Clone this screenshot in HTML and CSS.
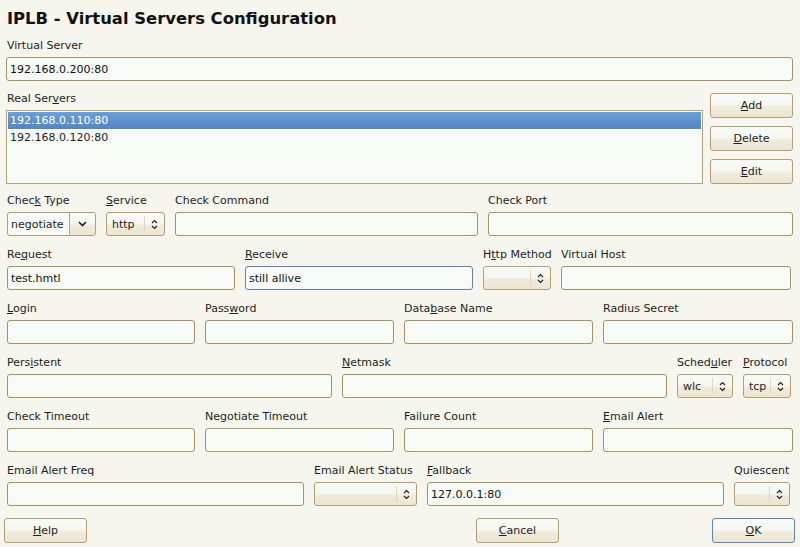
FILE: index.html
```html
<!DOCTYPE html>
<html>
<head>
<meta charset="utf-8">
<link rel="stylesheet" href="styles.css">
</head>
<body>
<div class="dialog">
  <h1 class="title">IPLB - Virtual Servers Configuration</h1>

  <div class="field vs">
    <label class="lbl">Virtual Server</label>
    <input class="inp" type="text" value="192.168.0.200:80">
  </div>

  <div class="real">
    <div class="real-left">
      <label class="lbl">Real Ser<u>v</u>ers</label>
      <div class="list">
        <div class="item sel">192.168.0.110:80</div>
        <div class="item">192.168.0.120:80</div>
      </div>
    </div>
    <div class="real-btns">
      <button class="btn"><u>A</u>dd</button>
      <button class="btn"><u>D</u>elete</button>
      <button class="btn"><u>E</u>dit</button>
    </div>
  </div>

  <div class="row r3">
    <div class="field"><label class="lbl">Chec<u>k</u> Type</label>
      <div class="combo drop"><span class="ctext">negotiate</span><span class="sep"></span>
        <span class="arr"><svg width="9" height="6" viewBox="0 0 9 6"><path d="M1 1 L4.5 4.5 L8 1" fill="none" stroke="#222" stroke-width="1.6"/></svg></span></div>
    </div>
    <div class="field"><label class="lbl"><u>S</u>ervice</label>
      <div class="combo"><span class="ctext">http</span><span class="sep"></span>
        <span class="arr"><svg width="7" height="11" viewBox="0 0 7 11"><path d="M1 4 L3.5 1.5 L6 4 M1 7 L3.5 9.5 L6 7" fill="none" stroke="#222" stroke-width="1.2"/></svg></span></div>
    </div>
    <div class="field"><label class="lbl">Check Command</label><input class="inp" type="text"></div>
    <div class="field"><label class="lbl">Check Port</label><input class="inp" type="text"></div>
  </div>

  <div class="row r4">
    <div class="field"><label class="lbl">Re<u>q</u>uest</label><input class="inp" type="text" value="test.hmtl"></div>
    <div class="field"><label class="lbl"><u>R</u>eceive</label><input class="inp focus" type="text" value="still allive"></div>
    <div class="field"><label class="lbl">H<u>t</u>tp Method</label>
      <div class="combo"><span class="ctext"></span><span class="sep"></span>
        <span class="arr"><svg width="7" height="11" viewBox="0 0 7 11"><path d="M1 4 L3.5 1.5 L6 4 M1 7 L3.5 9.5 L6 7" fill="none" stroke="#222" stroke-width="1.2"/></svg></span></div>
    </div>
    <div class="field"><label class="lbl">Virtual Host</label><input class="inp" type="text"></div>
  </div>

  <div class="row r5">
    <div class="field"><label class="lbl"><u>L</u>ogin</label><input class="inp" type="text"></div>
    <div class="field"><label class="lbl">Pass<u>w</u>ord</label><input class="inp" type="text"></div>
    <div class="field"><label class="lbl">Data<u>b</u>ase Name</label><input class="inp" type="text"></div>
    <div class="field"><label class="lbl">Radius Secret</label><input class="inp" type="text"></div>
  </div>

  <div class="row r6">
    <div class="field"><label class="lbl">Pers<u>i</u>stent</label><input class="inp" type="text"></div>
    <div class="field"><label class="lbl"><u>N</u>etmask</label><input class="inp" type="text"></div>
    <div class="field"><label class="lbl">Sched<u>u</u>ler</label>
      <div class="combo"><span class="ctext">wlc</span><span class="sep"></span>
        <span class="arr"><svg width="7" height="11" viewBox="0 0 7 11"><path d="M1 4 L3.5 1.5 L6 4 M1 7 L3.5 9.5 L6 7" fill="none" stroke="#222" stroke-width="1.2"/></svg></span></div>
    </div>
    <div class="field"><label class="lbl"><u>P</u>rotocol</label>
      <div class="combo"><span class="ctext">tcp</span><span class="sep"></span>
        <span class="arr"><svg width="7" height="11" viewBox="0 0 7 11"><path d="M1 4 L3.5 1.5 L6 4 M1 7 L3.5 9.5 L6 7" fill="none" stroke="#222" stroke-width="1.2"/></svg></span></div>
    </div>
  </div>

  <div class="row r7">
    <div class="field"><label class="lbl">Check Timeout</label><input class="inp" type="text"></div>
    <div class="field"><label class="lbl">Negotiate Timeout</label><input class="inp" type="text"></div>
    <div class="field"><label class="lbl">Failure Count</label><input class="inp" type="text"></div>
    <div class="field"><label class="lbl"><u>E</u>mail Alert</label><input class="inp" type="text"></div>
  </div>

  <div class="row r8">
    <div class="field"><label class="lbl">Email Alert Freq</label><input class="inp" type="text"></div>
    <div class="field"><label class="lbl">Email Alert Status</label>
      <div class="combo"><span class="ctext"></span><span class="sep"></span>
        <span class="arr"><svg width="7" height="11" viewBox="0 0 7 11"><path d="M1 4 L3.5 1.5 L6 4 M1 7 L3.5 9.5 L6 7" fill="none" stroke="#222" stroke-width="1.2"/></svg></span></div>
    </div>
    <div class="field"><label class="lbl"><u>F</u>allback</label><input class="inp" type="text" value="127.0.0.1:80"></div>
    <div class="field"><label class="lbl">Quiescent</label>
      <div class="combo"><span class="ctext"></span><span class="sep"></span>
        <span class="arr"><svg width="7" height="11" viewBox="0 0 7 11"><path d="M1 4 L3.5 1.5 L6 4 M1 7 L3.5 9.5 L6 7" fill="none" stroke="#222" stroke-width="1.2"/></svg></span></div>
    </div>
  </div>
</div>

<div class="bbar">
  <button class="btn"><u>H</u>elp</button>
  <button class="btn cancel"><u>C</u>ancel</button>
  <button class="btn ok"><u>O</u>K</button>
</div>
</body>
</html>
```

FILE: styles.css
```css
html, body {
  margin: 0;
  padding: 0;
  background: #f6f5ee;
  width: 800px;
  height: 547px;
  overflow: hidden;
}
body {
  font-family: "DejaVu Sans", sans-serif;
  font-size: 11px;
  color: #1e1e1e;
}
u { text-decoration: underline; text-underline-offset: 1px; }

.dialog {
  padding: 8px 7px 0 7px;
  width: 786px;
}
.title {
  margin: 0 0 9px 0;
  font-size: 16.4px;
  font-weight: bold;
  line-height: 22px;
  color: #111;
  height: 22px;
}
.field {
  display: flex;
  flex-direction: column;
  min-width: 0;
}
.lbl {
  display: block;
  height: 14px;
  line-height: 14px;
  margin-bottom: 4px;
  white-space: nowrap;
}
.inp {
  box-sizing: border-box;
  height: 24px;
  width: 100%;
  margin: 0;
  padding: 0 3px;
  font: inherit;
  color: #111;
  background: #f6fbf8;
  border: 1px solid #a89264;
  border-radius: 3px;
  outline: none;
}
.inp.focus { border-color: #5f83b3; }
.vs .inp { margin-left: -1px; width: 787px; }

.real {
  display: flex;
  margin-top: 11px;
  gap: 7px;
}
.real-left { flex: 1; display: flex; flex-direction: column; }
.real-left .lbl { margin-bottom: 4px; }
.list {
  box-sizing: border-box;
  height: 74px;
  width: 697px;
  margin-left: -1px;
  background: #f6fbf8;
  border: 1px solid #b5a27a;
  padding: 1px 1px;
}
.item {
  height: 17px;
  line-height: 17px;
  padding-left: 2px;
}
.item.sel {
  background: linear-gradient(#6d9fd6, #5186c3);
  color: #fff;
}
.real-btns {
  display: flex;
  flex-direction: column;
  gap: 8px;
  padding-top: 1px;
}
.btn {
  box-sizing: border-box;
  width: 83px;
  height: 25px;
  margin: 0;
  padding: 0;
  font: inherit;
  color: #1e1e1e;
  border: 1px solid #b29e72;
  border-radius: 3px;
  background: linear-gradient(#f7faf6 0%, #f5f8f2 45%, #efeadb 60%, #ebe5d3 100%);
}

.row {
  display: grid;
  column-gap: 10px;
}
.r3 { grid-template-columns: 89px 59px 303px 305px; margin-top: 10px; }
.r4 { grid-template-columns: 228px 228px 68px 230px; margin-top: 12px; }
.r5 { grid-template-columns: 188px 189px 189px 190px; margin-top: 12px; }
.r6 { grid-template-columns: 325px 325px 56px 48px; margin-top: 12px; }
.r7 { grid-template-columns: 188px 189px 189px 190px; margin-top: 12px; }
.r8 { grid-template-columns: 297px 103px 297px 56px; margin-top: 12px; }

.combo {
  box-sizing: border-box;
  height: 24px;
  display: flex;
  align-items: center;
  border: 1px solid #b29e72;
  border-radius: 3px;
  background: linear-gradient(#f7faf6 0%, #f5f8f2 45%, #efeadb 60%, #ebe5d3 100%);
  padding-left: 5px;
}
.ctext { flex: 1; white-space: nowrap; }
.sep {
  width: 1px;
  height: 16px;
  background: #e2d6bb;
}
.arr {
  width: 19px;
  display: flex;
  justify-content: center;
  align-items: center;
}
.combo.drop {
  background: #f6fbf8;
  padding-left: 3px;
}
.combo.drop .sep { height: 22px; background: #b9a885; }
.combo.drop .arr {
  width: 25px;
  height: 22px;
  background: linear-gradient(#f7faf6 0%, #f5f8f2 45%, #efeadb 60%, #ebe5d3 100%);
  border-radius: 0 3px 3px 0;
}

.bbar {
  display: flex;
  padding: 12px 5px 0 4px;
}
.bbar .cancel { margin-left: auto; margin-right: 153px; }
.bbar .ok { border-color: #5f83b3; }
```
